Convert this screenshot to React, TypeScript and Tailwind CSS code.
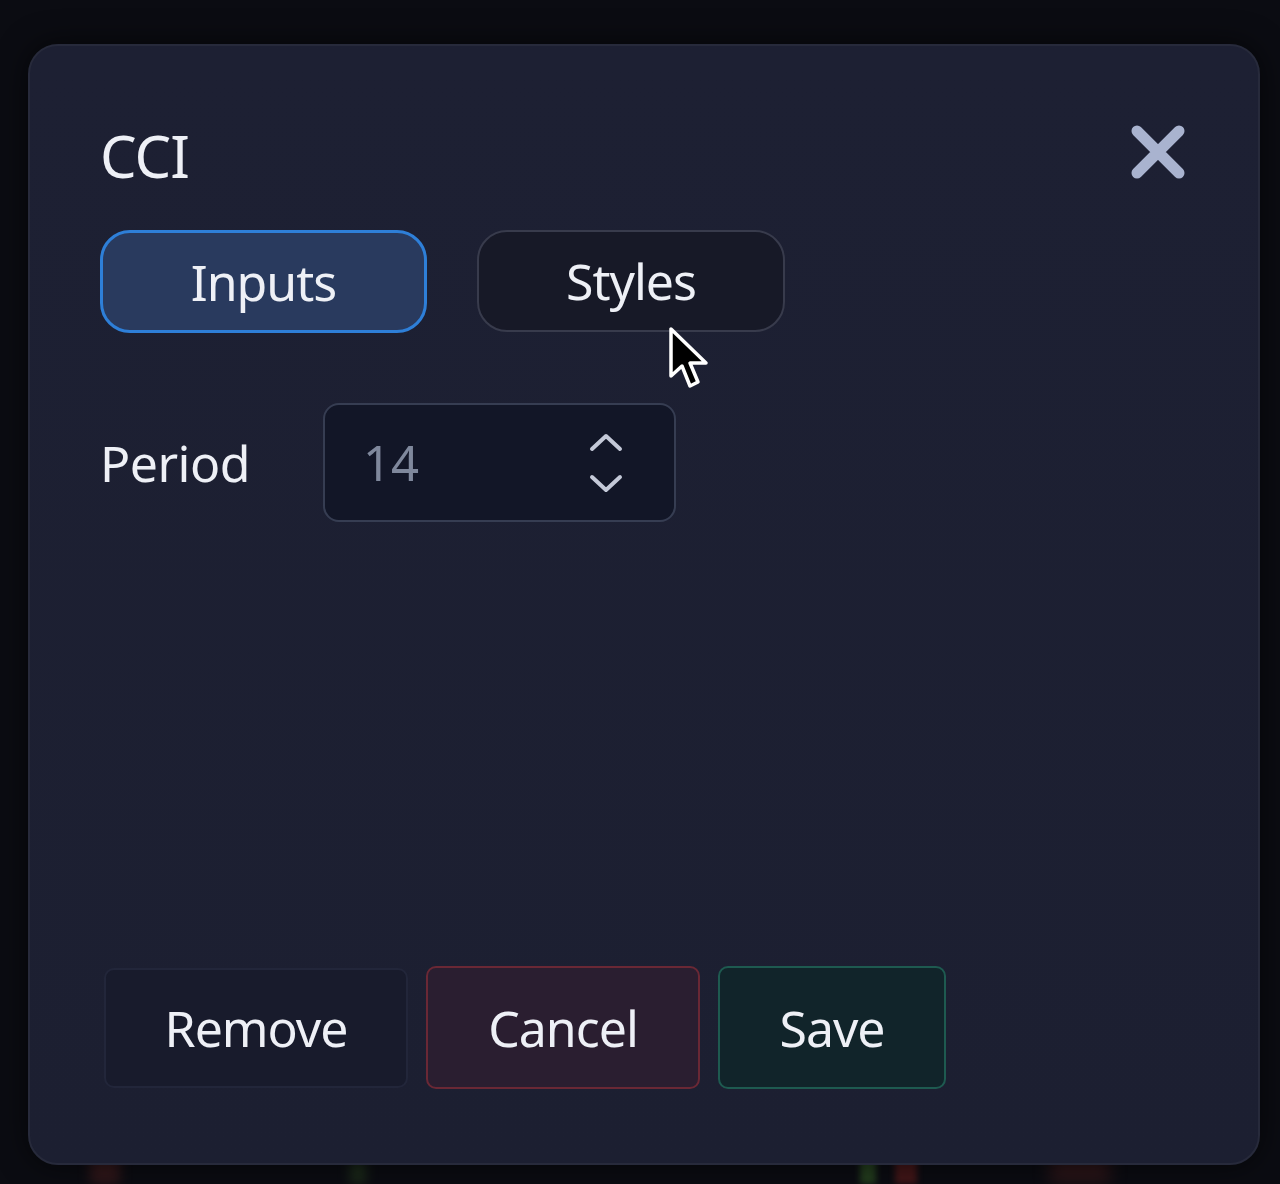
import React from 'react';

const font = { fontFamily: '"Noto Sans", "Open Sans", sans-serif' };

function CloseIcon() {
  return (
    <svg width="58" height="58" viewBox="0 0 58 58" fill="none" className="mb-[9px]">
      <path d="M8 8 L50 50 M50 8 L8 50" stroke="#a9b3cf" strokeWidth="11" strokeLinecap="round" />
    </svg>
  );
}

function Chevrons() {
  return (
    <svg width="40" height="72" viewBox="0 0 40 72" fill="none">
      <path d="M6 22 L20 9 L34 22" stroke="#c4c9d8" strokeWidth="4" strokeLinecap="round" strokeLinejoin="round" />
      <path d="M6 50 L20 63 L34 50" stroke="#c4c9d8" strokeWidth="4" strokeLinecap="round" strokeLinejoin="round" />
    </svg>
  );
}

function Pointer() {
  return (
    <svg width="44" height="66" viewBox="0 0 44 66" className="absolute left-[668px] top-[326px]">
      <path
        d="M3 3 L3 50 L14 40 L22 60 L30 56 L22 37 L38 37 Z"
        fill="#000"
        stroke="#fff"
        strokeWidth="3.5"
        strokeLinejoin="round"
      />
    </svg>
  );
}

export default function App() {
  return (
    <div className="relative w-[1280px] h-[1184px] overflow-hidden bg-[#0b0c12]" style={font}>
      {/* faint chart candles behind the dialog */}
      <div className="absolute bottom-0 left-[90px] w-[30px] h-[30px] bg-[#4a1f1f] blur-[6px] opacity-60" />
      <div className="absolute bottom-0 left-[350px] w-[16px] h-[24px] bg-[#2d4a22] blur-[6px] opacity-50" />
      <div className="absolute bottom-0 left-[860px] w-[16px] h-[30px] bg-[#2e5223] blur-[3px] opacity-70" />
      <div className="absolute bottom-0 left-[895px] w-[22px] h-[30px] bg-[#5a1b1b] blur-[3px] opacity-70" />
      <div className="absolute bottom-0 left-[1050px] w-[60px] h-[30px] bg-[#4a1e1e] blur-[8px] opacity-50" />

      <div className="absolute left-[28px] top-[44px] w-[1232px] h-[1121px] rounded-[30px] border-2 border-[#272a3b] bg-gradient-to-b from-[#1d2033] to-[#1c1f31] shadow-[0_0_30px_rgba(0,0,0,0.6)] flex flex-col pl-[70px] pr-[71px] pt-[75px] pb-[74px]">
        <div className="flex items-center justify-between h-[70px]">
          <div className="text-[58px] leading-none text-[#eef0f6] tracking-[-1px]">CCI</div>
          <CloseIcon />
        </div>

        <div className="flex gap-[50px] mt-[39px]">
          <button className="w-[327px] h-[103px] rounded-[30px] border-[3px] border-[#2e7fd8] bg-[#293a5e] text-[50px] text-[#eef0f6] leading-none tracking-[-1px]">
            Inputs
          </button>
          <button className="w-[308px] h-[102px] rounded-[30px] border-2 border-[#383b4c] bg-[#171927] text-[50px] text-[#eef0f6] leading-none tracking-[-1px]">
            Styles
          </button>
        </div>

        <div className="flex items-center mt-[70px]">
          <div className="w-[223px] text-[50px] leading-none text-[#eef0f6] tracking-[-0.5px]">Period</div>
          <div className="w-[353px] h-[119px] rounded-[16px] border-2 border-[#363d52] bg-[#121627] flex items-center justify-between pl-[38px] pr-[48px]">
            <span className="text-[49px] leading-none text-[#7f889c]">14</span>
            <Chevrons />
          </div>
        </div>

        <div className="flex-1" />

        <div className="flex items-center gap-[18px] pl-[4px]">
          <button className="w-[304px] h-[120px] rounded-[10px] border-2 border-[#22263a] bg-[#181b2c] text-[50px] leading-none text-[#eef0f6] tracking-[-1px]">
            Remove
          </button>
          <button className="w-[274px] h-[123px] rounded-[10px] border-2 border-[#6a2835] bg-[#2a1e30] text-[50px] leading-none text-[#eef0f6] tracking-[-1px]">
            Cancel
          </button>
          <button className="w-[228px] h-[123px] rounded-[10px] border-2 border-[#1e5a50] bg-[#11242a] text-[50px] leading-none text-[#eef0f6] tracking-[-1px]">
            Save
          </button>
        </div>
      </div>

      <Pointer />
    </div>
  );
}
